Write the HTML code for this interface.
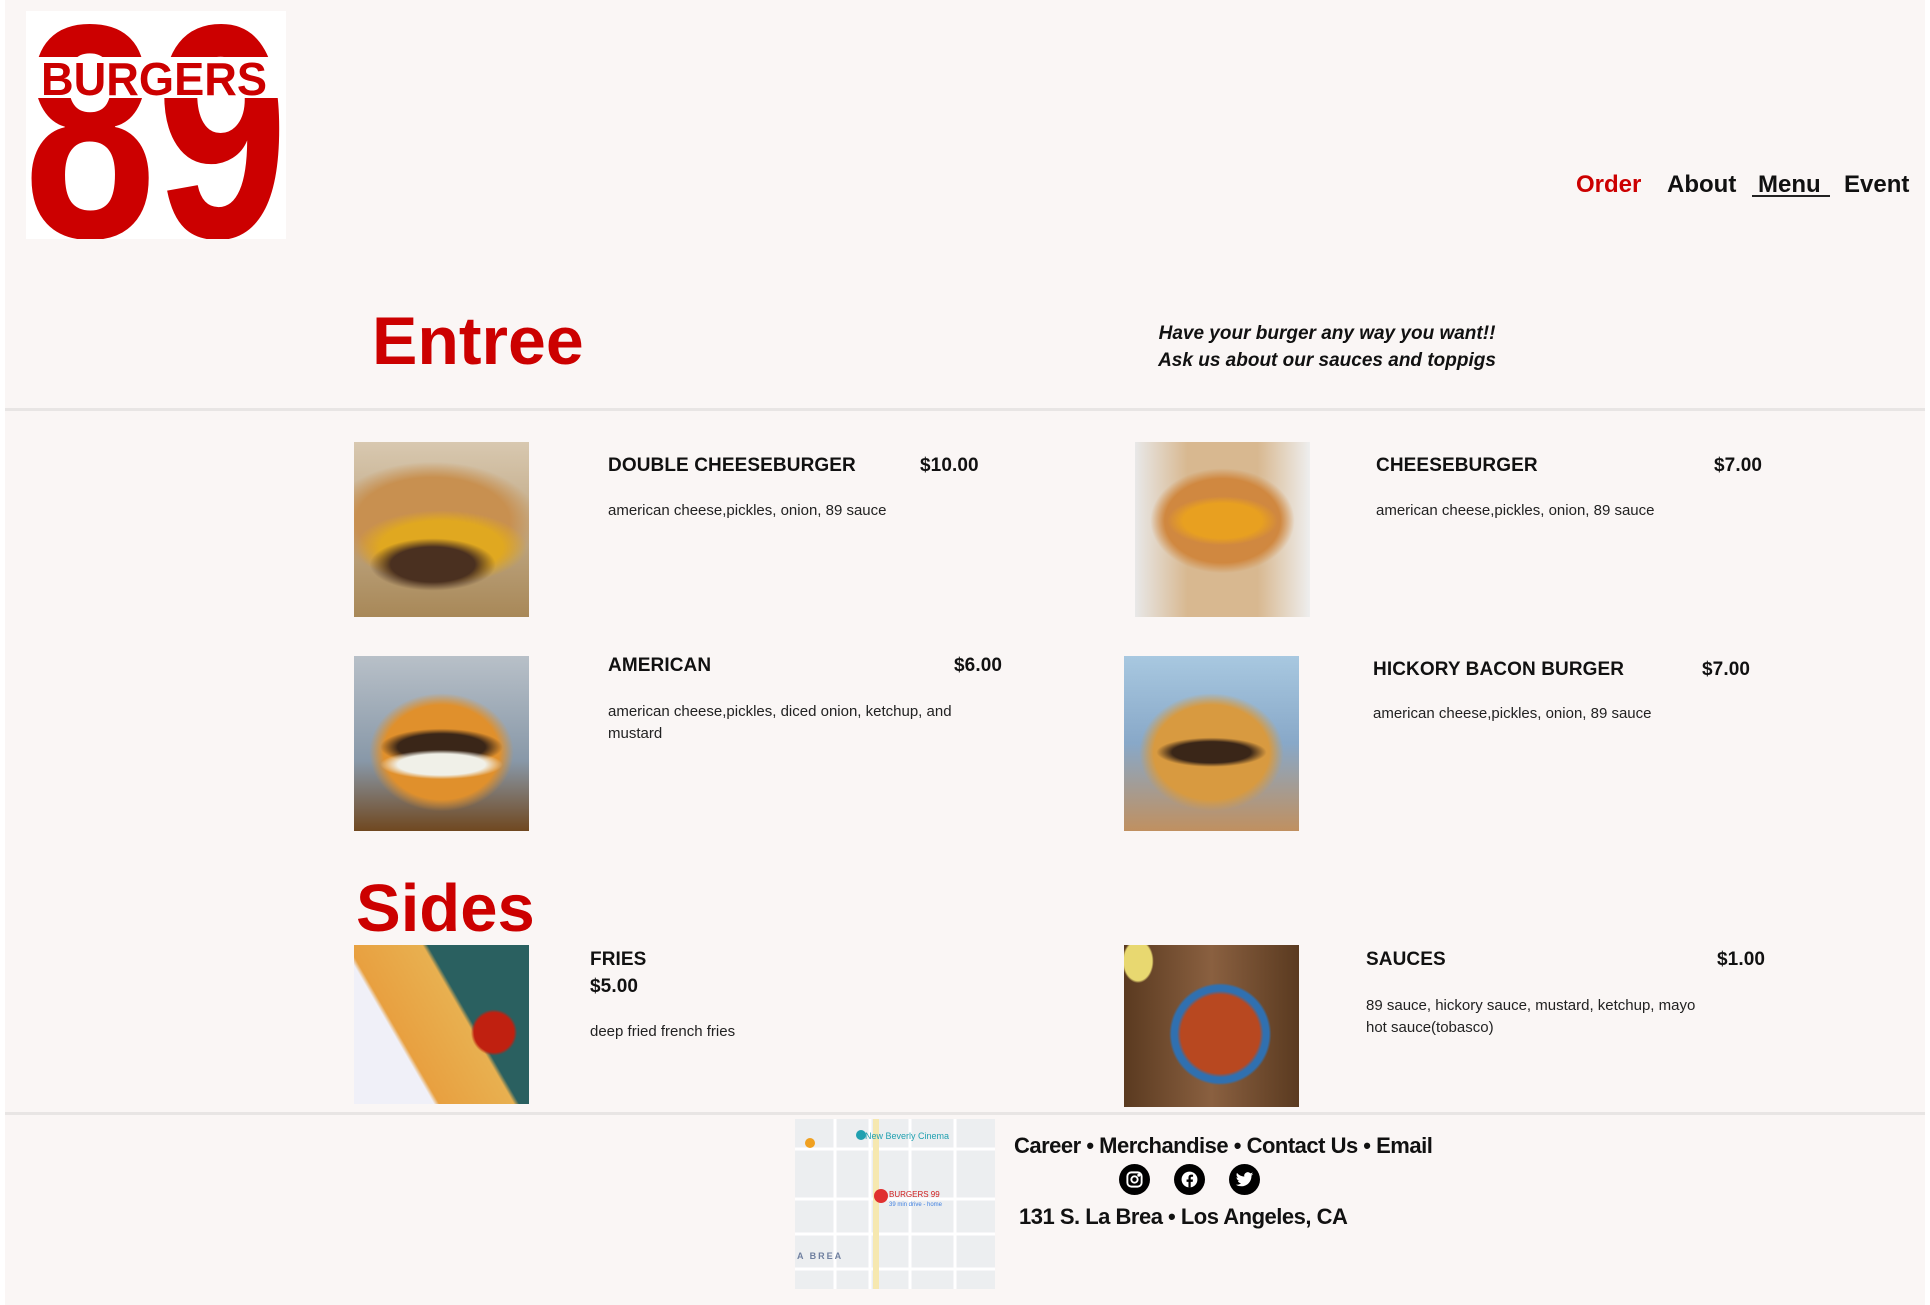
<!DOCTYPE html>
<html><head><meta charset="utf-8"><style>
*{margin:0;padding:0;box-sizing:border-box}
body{width:1930px;height:1305px;background:#fff;position:relative;overflow:hidden;font-family:"Liberation Sans",sans-serif;color:#111}
#bg{position:absolute;left:5px;top:0;width:1920px;height:1305px;background:#faf6f5}
.a{position:absolute;white-space:nowrap}
.nav{font-size:24px;font-weight:bold;top:171px}
.t{font-size:19px;font-weight:600;letter-spacing:.1px}
.d{font-size:15px;color:#222}
.img{position:absolute;width:175px;height:175px;overflow:hidden}
.h{color:#cc0000;font-weight:bold;font-size:64px}
.ic{position:absolute;top:1164px;width:31px;height:31px;border-radius:50%;background:#000}
.ic svg{position:absolute;left:6px;top:6px}
</style></head><body>
<div id="bg"></div>
<div class="a" style="left:5px;top:408px;width:1920px;height:3px;background:#e8e5e4"></div>
<div class="a" style="left:5px;top:1112px;width:1920px;height:3px;background:#e8e5e4"></div>

<!-- logo -->
<div class="a" style="left:26px;top:11px;width:260px;height:228px;background:#fff;overflow:hidden">
<svg width="260" height="228" viewBox="0 0 260 228">
<text x="-2" y="226" font-family="Liberation Sans" font-weight="bold" font-size="305" fill="#cc0000" textLength="264" lengthAdjust="spacingAndGlyphs">89</text>
<rect x="0" y="46" width="260" height="41" fill="#fff"/>
<text x="15" y="84" font-family="Liberation Sans" font-weight="bold" font-size="46" fill="#cc0000" textLength="226" lengthAdjust="spacingAndGlyphs">BURGERS</text>
</svg></div>

<div class="a nav" style="left:1576px;color:#cc0000">Order</div>
<div class="a nav" style="left:1667px">About</div>
<div class="a nav" style="left:1758px">Menu</div>
<div class="a" style="left:1752px;top:195px;width:78px;height:2px;background:#222"></div>
<div class="a nav" style="left:1844px">Event</div>

<div class="a h" style="left:372px;top:302px;font-size:68px">Entree</div>
<div class="a" style="left:1127px;top:320px;width:400px;text-align:center;font-size:19px;font-style:italic;font-weight:bold;line-height:27px">Have your burger any way you want!!<br>Ask us about our sauces and toppigs</div>

<!-- images -->
<div class="img" style="left:354px;top:442px;background:radial-gradient(ellipse 60% 25% at 45% 70%,#4a3020 40%,transparent 60%),radial-gradient(ellipse 70% 30% at 50% 60%,#e0a820 50%,transparent 70%),radial-gradient(ellipse 80% 45% at 45% 45%,#c89050 55%,transparent 75%),linear-gradient(#d8c8b0,#a88858)"></div>
<div class="img" style="left:1135px;top:442px;background:radial-gradient(ellipse 45% 20% at 50% 45%,#e8a020 50%,transparent 70%),radial-gradient(ellipse 55% 40% at 50% 45%,#d08840 60%,transparent 75%),linear-gradient(90deg,#e8e8e8,#d8b890 30%,#d8b890 70%,#eee)"></div>
<div class="a t" style="left:608px;top:455px">DOUBLE CHEESEBURGER</div>
<div class="a t" style="left:920px;top:455px">$10.00</div>
<div class="a d" style="left:608px;top:502px">american cheese,pickles, onion, 89 sauce</div>
<div class="a t" style="left:1376px;top:455px">CHEESEBURGER</div>
<div class="a t" style="left:1714px;top:455px">$7.00</div>
<div class="a d" style="left:1376px;top:502px">american cheese,pickles, onion, 89 sauce</div>

<div class="img" style="left:354px;top:656px;background:radial-gradient(ellipse 50% 12% at 50% 62%,#f0f0e8 50%,transparent 70%),radial-gradient(ellipse 50% 15% at 50% 52%,#3a2618 50%,transparent 70%),radial-gradient(ellipse 55% 45% at 50% 55%,#e0902c 60%,transparent 75%),linear-gradient(#b8c0c8,#8898a8 60%,#704820)"></div>
<div class="img" style="left:1124px;top:656px;background:radial-gradient(ellipse 45% 12% at 50% 55%,#3a2618 50%,transparent 70%),radial-gradient(ellipse 55% 45% at 50% 55%,#d89a40 60%,transparent 75%),linear-gradient(#a8c8e0,#88a8c8 50%,#c09060)"></div>
<div class="a t" style="left:608px;top:655px">AMERICAN</div>
<div class="a t" style="left:954px;top:655px">$6.00</div>
<div class="a d" style="left:608px;top:701px;white-space:normal;width:390px;line-height:22px">american cheese,pickles, diced onion, ketchup, and mustard</div>
<div class="a t" style="left:1373px;top:659px">HICKORY BACON BURGER</div>
<div class="a t" style="left:1702px;top:659px">$7.00</div>
<div class="a d" style="left:1373px;top:705px">american cheese,pickles, onion, 89 sauce</div>

<div class="a h" style="left:356px;top:870px;font-size:67px">Sides</div>

<div class="img" style="left:354px;top:945px;height:159px;background:radial-gradient(circle at 80% 55%,#c02010 12%,transparent 14%),linear-gradient(60deg,#f0f0f8 30%,#e8a040 32%,#e8b050 60%,#2a6060 62%)"></div>
<div class="img" style="left:1124px;top:945px;height:162px;background:radial-gradient(circle at 55% 55%,#b84820 30%,#3070b0 33%,#3070b0 37%,transparent 39%),radial-gradient(ellipse 10% 15% at 8% 10%,#e8d870 80%,transparent 90%),linear-gradient(90deg,#5a3a20,#8a6040,#5a3a20)"></div>
<div class="a t" style="left:590px;top:949px">FRIES</div>
<div class="a t" style="left:590px;top:976px">$5.00</div>
<div class="a d" style="left:590px;top:1023px">deep fried french fries</div>
<div class="a t" style="left:1366px;top:949px">SAUCES</div>
<div class="a t" style="left:1717px;top:949px">$1.00</div>
<div class="a d" style="left:1366px;top:995px;line-height:22px">89 sauce, hickory sauce, mustard, ketchup, mayo<br>hot sauce(tobasco)</div>

<!-- footer map -->
<div class="a" style="left:795px;top:1119px;width:200px;height:170px;background:#eceef0;overflow:hidden">
<svg width="200" height="170">
<g stroke="#fff" stroke-width="3"><line x1="0" y1="30" x2="200" y2="30"/><line x1="0" y1="80" x2="200" y2="80"/><line x1="0" y1="115" x2="200" y2="115"/><line x1="0" y1="150" x2="200" y2="150"/>
<line x1="40" y1="0" x2="40" y2="170"/><line x1="75" y1="0" x2="75" y2="170"/><line x1="115" y1="0" x2="115" y2="170"/><line x1="160" y1="0" x2="160" y2="170"/></g>
<rect x="78" y="0" width="6" height="170" fill="#f6e8b0"/>
<text x="70" y="20" font-size="9" fill="#20a0b0" font-family="Liberation Sans">New Beverly Cinema</text>
<circle cx="66" cy="16" r="5" fill="#20a0b0"/><circle cx="15" cy="24" r="5" fill="#f0a020"/>
<circle cx="86" cy="77" r="7" fill="#e03030"/>
<text x="94" y="78" font-size="8" fill="#d02020" font-family="Liberation Sans">BURGERS 99</text>
<text x="94" y="87" font-size="6" fill="#4080e0" font-family="Liberation Sans">39 min drive - home</text>
<text x="2" y="140" font-size="9" fill="#7080a0" font-weight="bold" font-family="Liberation Sans" letter-spacing="2">A BREA</text>
</svg></div>

<div class="a" style="left:1014px;top:1133px;font-size:22px;font-weight:bold;letter-spacing:-.5px">Career • Merchandise • Contact Us • Email</div>
<div class="ic" style="left:1119px"><svg width="19" height="19" viewBox="0 0 24 24" fill="none" stroke="#fff" stroke-width="2.4"><rect x="3" y="3" width="18" height="18" rx="5"/><circle cx="12" cy="12" r="4"/><circle cx="17.5" cy="6.5" r=".8" fill="#fff"/></svg></div>
<div class="ic" style="left:1174px"><svg width="19" height="19" viewBox="0 0 24 24"><circle cx="12" cy="12" r="10" fill="#fff"/><path d="M13.5 22v-7h2.5l.4-3h-2.9v-2c0-.8.3-1.4 1.5-1.4h1.5V6c-.3 0-1.2-.1-2.2-.1-2.2 0-3.6 1.3-3.6 3.7V12H8.3v3h2.4v7z" fill="#000"/></svg></div>
<div class="ic" style="left:1229px"><svg width="19" height="19" viewBox="0 0 24 24"><path d="M23 5c-.8.4-1.7.6-2.6.7.9-.6 1.6-1.4 2-2.5-.9.5-1.900.9-2.9 1.1A4.5 4.5 0 0 0 11.8 8.4 12.8 12.8 0 0 1 2.5 3.7a4.5 4.5 0 0 0 1.4 6c-.7 0-1.4-.2-2-.6 0 2.2 1.6 4 3.6 4.4-.7.2-1.4.2-2 .1.6 1.8 2.2 3.1 4.2 3.1A9 9 0 0 1 1 18.6 12.8 12.8 0 0 0 7.9 20.6c8.3 0 12.9-6.9 12.9-12.9v-.6C21.7 6.5 22.4 5.8 23 5z" fill="#fff"/></svg></div>
<div class="a" style="left:1019px;top:1204px;font-size:22px;font-weight:bold;letter-spacing:-.5px">131 S. La Brea • Los Angeles, CA</div>
</body></html>
